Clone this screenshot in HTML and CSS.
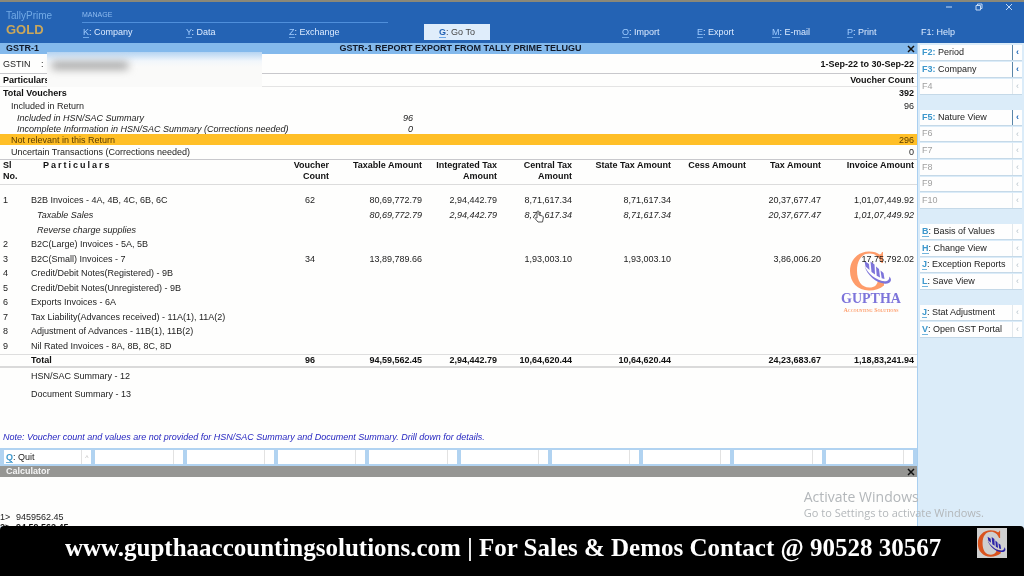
FILE: index.html
```html
<!DOCTYPE html>
<html lang="en">
<head>
<meta charset="utf-8">
<title>TallyPrime - GSTR-1</title>
<link rel="stylesheet" href="styles.css">
</head>
<body>
<svg class="defs" aria-hidden="true">
  <symbol id="mark" viewBox="0 0 44 40">
    <path class="mark-c" d="M34 1 L34 12 L32.500 12 C30.500 6 26 2.600 20.500 2.600 C12.500 2.600 8 9.500 8 19.500 C8 30 12.500 36.500 20.500 36.500 C25.500 36.500 28.500 34 29 29 L35 30.500 L35 34.500 C31 37.800 26 39.500 20 39.500 C8.500 39.500 1 31 1 20 C1 8.500 9.500 0.500 20 0.500 C25 0.500 28 1.700 30.500 3.500 C32 3.500 32.500 2.500 33 1 Z"/>
    <path class="mark-p" d="M15.500 10 L20 13 L20.500 19 L16.500 15.500 Z M21.500 10.500 L25.500 13.500 L26 23.500 L22.500 21 Z M27 15.500 L30 18 L31 26.500 L27.700 24.700 Z M31.500 19.500 L34.500 22 L35.500 28 L32.700 27.300 Z"/>
    <path class="mark-p" d="M15.500 15 C19 22.500 27 29.500 35 30.200 C39 30.500 40.500 28.500 40.300 25.500 C43.800 29 41.500 33 36 32.700 C27 32 18 24 15.500 15 Z"/>
  </symbol>
</svg>

<header class="top">
  <div class="brand">
    <span class="brand-name">TallyPrime</span>
    <strong class="brand-tier">GOLD</strong>
  </div>
  <div class="manage"><span>MANAGE</span></div>
  <div class="window-controls">
    <button aria-label="Minimize"><svg viewBox="0 0 8 8"><path d="M1 4H7"/></svg></button>
    <button aria-label="Restore"><svg viewBox="0 0 8 8"><path d="M1 2.500H5.500V7H1ZM2.500 2.500V1H7V5.500H5.500"/></svg></button>
    <button aria-label="Close window"><svg viewBox="0 0 8 8"><path d="M1 1L7 7M7 1L1 7"/></svg></button>
  </div>
  <nav class="menu">
    <button><b>K</b>: Company</button>
    <button><b>Y</b>: Data</button>
    <button><b>Z</b>: Exchange</button>
    <button class="goto"><b>G</b>: Go To</button>
    <button><b>O</b>: Import</button>
    <button><b>E</b>: Export</button>
    <button><b>M</b>: E-mail</button>
    <button><b>P</b>: Print</button>
    <button>F1: Help</button>
  </nav>
</header>

<div class="work">
  <main class="report">
    <div class="titlebar">
      <span>GSTR-1</span>
      <h1>GSTR-1 REPORT EXPORT FROM TALLY PRIME TELUGU</h1>
      <button class="close" aria-label="Close report"><svg viewBox="0 0 8 8"><path d="M1 1L7 7M7 1L1 7"/></svg></button>
    </div>
    <div class="ident">
      <span class="ident-label">GSTIN</span><span>:</span>
      <strong>1-Sep-22 to 30-Sep-22</strong>
      <div class="redacted"><i></i></div>
    </div>
    <table class="summary">
      <colgroup><col class="s-label"><col class="s-sub"><col></colgroup>
      <thead><tr><th>Particulars</th><th></th><th>Voucher Count</th></tr></thead>
      <tbody>
        <tr class="strong"><td>Total Vouchers</td><td></td><td>392</td></tr>
        <tr><td class="in1">Included in Return</td><td></td><td>96</td></tr>
        <tr class="it"><td class="in2">Included in HSN/SAC Summary</td><td>96</td><td></td></tr>
        <tr class="it short"><td class="in2">Incomplete Information in HSN/SAC Summary (Corrections needed)</td><td>0</td><td></td></tr>
        <tr class="picked"><td class="in1">Not relevant in this Return</td><td></td><td>296</td></tr>
        <tr class="last"><td class="in1">Uncertain Transactions (Corrections needed)</td><td></td><td>0</td></tr>
      </tbody>
    </table>
    <table class="detail">
      <colgroup><col class="c-sl"><col><col class="c-75"><col class="c-93"><col class="c-75"><col class="c-75"><col class="c-99"><col class="c-75"><col class="c-75"><col class="c-95"></colgroup>
      <thead>
        <tr><th>Sl<br>No.</th><th class="spaced">Particulars</th><th>Voucher<br>Count</th><th>Taxable Amount</th><th>Integrated Tax<br>Amount</th><th>Central Tax<br>Amount</th><th>State Tax Amount</th><th>Cess Amount</th><th>Tax Amount</th><th>Invoice Amount</th></tr>
      </thead>
      <tbody>
        <tr><td>1</td><td>B2B Invoices - 4A, 4B, 4C, 6B, 6C</td><td>62</td><td>80,69,772.79</td><td>2,94,442.79</td><td>8,71,617.34</td><td>8,71,617.34</td><td></td><td>20,37,677.47</td><td>1,01,07,449.92</td></tr>
        <tr class="it"><td></td><td>Taxable Sales</td><td></td><td>80,69,772.79</td><td>2,94,442.79</td><td>8,71,617.34</td><td>8,71,617.34</td><td></td><td>20,37,677.47</td><td>1,01,07,449.92</td></tr>
        <tr class="it"><td></td><td>Reverse charge supplies</td><td></td><td></td><td></td><td></td><td></td><td></td><td></td><td></td></tr>
        <tr><td>2</td><td>B2C(Large) Invoices - 5A, 5B</td><td></td><td></td><td></td><td></td><td></td><td></td><td></td><td></td></tr>
        <tr><td>3</td><td>B2C(Small) Invoices - 7</td><td>34</td><td>13,89,789.66</td><td></td><td>1,93,003.10</td><td>1,93,003.10</td><td></td><td>3,86,006.20</td><td>17,75,792.02</td></tr>
        <tr><td>4</td><td>Credit/Debit Notes(Registered) - 9B</td><td></td><td></td><td></td><td></td><td></td><td></td><td></td><td></td></tr>
        <tr><td>5</td><td>Credit/Debit Notes(Unregistered) - 9B</td><td></td><td></td><td></td><td></td><td></td><td></td><td></td><td></td></tr>
        <tr><td>6</td><td>Exports Invoices - 6A</td><td></td><td></td><td></td><td></td><td></td><td></td><td></td><td></td></tr>
        <tr><td>7</td><td>Tax Liability(Advances received) - 11A(1), 11A(2)</td><td></td><td></td><td></td><td></td><td></td><td></td><td></td><td></td></tr>
        <tr><td>8</td><td>Adjustment of Advances - 11B(1), 11B(2)</td><td></td><td></td><td></td><td></td><td></td><td></td><td></td><td></td></tr>
        <tr><td>9</td><td>Nil Rated Invoices - 8A, 8B, 8C, 8D</td><td></td><td></td><td></td><td></td><td></td><td></td><td></td><td></td></tr>
      </tbody>
      <tfoot>
        <tr class="total"><td></td><td>Total</td><td>96</td><td>94,59,562.45</td><td>2,94,442.79</td><td>10,64,620.44</td><td>10,64,620.44</td><td></td><td>24,23,683.67</td><td>1,18,83,241.94</td></tr>
        <tr class="after"><td></td><td>HSN/SAC Summary - 12</td><td colspan="8"></td></tr>
        <tr class="after"><td></td><td>Document Summary - 13</td><td colspan="8"></td></tr>
      </tfoot>
    </table>
    <p class="note">Note: Voucher count and values are not provided for HSN/SAC Summary and Document Summary. Drill down for details.</p>
    <div class="footbar">
      <button><span><b>Q</b>: Quit</span><i>^</i></button>
      <div><span></span><i></i></div><div><span></span><i></i></div><div><span></span><i></i></div>
      <div><span></span><i></i></div><div><span></span><i></i></div><div><span></span><i></i></div>
      <div><span></span><i></i></div><div><span></span><i></i></div><div><span></span><i></i></div>
    </div>
    <section class="calc">
      <h2>Calculator<button class="close" aria-label="Close calculator"><svg viewBox="0 0 8 8"><path d="M1 1L7 7M7 1L1 7"/></svg></button></h2>
      <div class="calc-lines">
        <p><span>1&gt;</span>9459562.45</p>
        <p class="strong"><span>2&gt;</span>94,59,562.45</p>
      </div>
    </section>
    <div class="stamp">
      <svg class="stamp-mark"><use href="#mark"/></svg>
      <strong>GUPTHA</strong>
      <small>Accounting Solutions</small>
    </div>
    <svg class="pointer" viewBox="0 0 10 13"><path d="M3 8V2Q3 1 4 1T5 2V5L8.500 6Q9.500 6.500 9.300 8L8.500 12H4L1 8.500Q1 7 3 8Z"/></svg>
  </main>

  <aside class="side">
    <div class="keys keys-3">
      <button class="on"><span><b>F2:</b> Period</span><i>‹</i></button>
      <button class="on"><span><b>F3:</b> Company</span><i>‹</i></button>
      <button disabled><span>F4</span><i>‹</i></button>
    </div>
    <div class="keys keys-6">
      <button class="on"><span><b>F5:</b> Nature View</span><i>‹</i></button>
      <button disabled><span>F6</span><i>‹</i></button>
      <button disabled><span>F7</span><i>‹</i></button>
      <button disabled><span>F8</span><i>‹</i></button>
      <button disabled><span>F9</span><i>‹</i></button>
      <button disabled><span>F10</span><i>‹</i></button>
    </div>
    <div class="keys keys-4">
      <button><span><b class="u">B</b>: Basis of Values</span><i>‹</i></button>
      <button><span><b class="u">H</b>: Change View</span><i>‹</i></button>
      <button><span><b class="u">J</b>: Exception Reports</span><i>‹</i></button>
      <button><span><b class="u">L</b>: Save View</span><i>‹</i></button>
    </div>
    <div class="keys keys-2">
      <button><span><b class="u">J</b>: Stat Adjustment</span><i>‹</i></button>
      <button><span><b class="u">V</b>: Open GST Portal</span><i>‹</i></button>
    </div>
  </aside>
  <div class="activate">
    <p>Activate Windows</p>
    <small>Go to Settings to activate Windows.</small>
  </div>
</div>

<footer class="banner">
  <p>www.gupthaaccountingsolutions.com | For Sales &amp; Demos Contact @ 90528 30567</p>
  <span class="badge"><svg><use href="#mark"/></svg></span>
</footer>
</body>
</html>
```
FILE: styles.css
```css
* { box-sizing: border-box; }
body {
  margin: 0;
  height: 100vh;
  display: flex;
  flex-direction: column;
  overflow: hidden;
  background: #dbecf9;
  color: #222;
  font: 9px/11px "Liberation Sans", Arial, sans-serif;
}
p, h1, h2 { margin: 0; font-size: inherit; }
i { font-style: normal; }
button { margin: 0; padding: 0; border: 0; background: none; color: inherit; font: inherit; text-align: left; white-space: nowrap; }
.defs { position: absolute; width: 0; height: 0; }
.mark-c { fill: var(--mark-c); }
.mark-p { fill: var(--mark-p); }

/* Top bar */
.top {
  flex: none;
  display: grid;
  grid-template-columns: 82px 1fr 92px;
  grid-template-rows: 21px 20px;
  background: #2463b4;
  border-top: 2px solid #8b8878;
  color: #dcebff;
}
.brand { grid-row: 1 / 3; display: flex; flex-direction: column; padding: 8px 0 0 6px; }
.brand-name { font-size: 10px; line-height: 12px; color: #72aae6; }
.brand-tier { font-size: 13px; line-height: 16px; color: #c9a75c; }
.manage { display: flex; align-items: flex-end; font-size: 7px; color: #8fbcf0; }
.manage span { width: 36%; padding-bottom: 2px; border-bottom: 1px solid #4f8fdb; }
.window-controls { display: flex; justify-content: space-between; padding: 1px 11px 0 13px; }
.window-controls button { height: 8px; line-height: 0; }
.window-controls svg { width: 8px; height: 8px; fill: none; stroke: #c4daf5; }
.menu {
  grid-column: 2 / 4;
  display: grid;
  grid-template-columns: 103fr 103fr 136fr 197fr 75fr 75fr 75fr 74fr 104fr;
  align-items: center;
  padding-bottom: 2px;
}
.menu b { font-weight: 400; color: #9fccff; border-bottom: 1px solid #6fa8e8; }
.menu button { height: 16px; padding-left: 1px; }
.menu .goto { justify-self: start; width: 66px; padding: 0; background: #dfedfb; color: #444; text-align: center; }
.menu .goto b { font-weight: 700; color: #2463b4; }

/* Work area */
.work { position: relative; flex: 1; min-height: 0; display: grid; grid-template-columns: 1fr 107px; grid-template-rows: 100%; }
.report { position: relative; display: flex; flex-direction: column; min-width: 0; background: #fefefd; }
.titlebar {
  display: grid;
  grid-template-columns: 1fr auto 1fr;
  height: 11px;
  padding: 0 2px 0 6px;
  background: #83b9ec;
  color: #101828;
  font-weight: 700;
}
.close { justify-self: end; line-height: 0; }
.close svg { width: 8px; height: 8px; fill: none; stroke: #111; stroke-width: 1.5; }
.ident { position: relative; display: flex; align-items: center; height: 20px; padding: 1px 3px 0 3px; border-bottom: 1px solid #c8c8cc; }
.ident-label { width: 38px; }
.ident strong { margin-left: auto; color: #111; }
.redacted { position: absolute; left: 47px; top: -2px; width: 215px; height: 35px; background: linear-gradient(#b5d4f2, #f1f6fb 9px, #fafaf9 15px); }
.redacted i { display: block; width: 76px; height: 7px; margin: 10px 0 0 5px; background: #999; filter: blur(4px); }

table { width: 100%; border-collapse: collapse; table-layout: fixed; }
td, th { padding: 0; white-space: nowrap; line-height: 10px; text-align: right; vertical-align: middle; }
th, .strong td, .total td { color: #111; font-weight: 700; }
.it { font-style: italic; }

.s-label { width: 300px; }
.s-sub { width: 113px; }
.summary th:first-child, .summary td:first-child { padding-left: 3px; text-align: left; }
.summary th:last-child, .summary td:last-child { padding-right: 3px; }
.summary thead tr { height: 12px; border-bottom: 1px solid #e4e4e4; }
.summary tbody tr { height: 12px; }
.summary tbody .strong { height: 14px; }
.summary tbody .short { height: 10px; }
.summary tbody .picked { height: 11px; background: #ffbf27; color: #5a3c00; }
.summary tbody .last { height: 14px; }
.summary td.in1 { padding-left: 11px; }
.summary td.in2 { padding-left: 17px; }

.c-sl { width: 31px; }
.c-75 { width: 75px; }
.c-93 { width: 93px; }
.c-95 { width: 96px; }
.c-99 { width: 99px; }
.detail thead tr { height: 25px; border-top: 1px solid #c8c8cc; border-bottom: 1px solid #dcdcdc; }
.detail th { vertical-align: top; line-height: 11px; }
.detail th:first-child, .detail td:first-child { padding-left: 3px; text-align: left; }
.detail td:nth-child(2) { text-align: left; }
.detail th:last-child, .detail td:last-child { padding-right: 3px; }
.detail td:nth-child(3) { padding-right: 14px; }
.detail .spaced { padding-left: 12px; text-align: left; letter-spacing: 2px; }
.detail tbody::before { content: ""; display: table-row; height: 8px; }
.detail tbody tr { height: 15px; }
.detail tbody tr:nth-child(n+3):nth-child(odd) { height: 14px; }
.detail .it td:nth-child(2) { padding-left: 6px; }
.detail tbody::after { content: ""; display: table-row; height: 2px; }
.detail .total { height: 12px; border-top: 1px solid #dedede; border-bottom: 2px solid #dadada; }
.detail .after { height: 18px; }

.note { margin-top: auto; padding: 0 3px 5px; color: #2626c0; font-style: italic; }
.footbar { display: grid; grid-template-columns: repeat(10, 1fr); gap: 4px; height: 18px; padding: 2px 4px; background: #b1d3f1; }
.footbar > * { display: flex; align-items: center; height: 14px; background: #fff; }
.footbar span { flex: 1; padding-left: 2px; }
.footbar i { align-self: stretch; width: 10px; border-left: 1px solid #e2e2e2; color: #bbb; font-size: 7px; line-height: 16px; text-align: center; }
.footbar b, .keys .u { color: #3d97cc; border-bottom: 1px solid #72b4dc; }
.calc { flex: none; height: 60px; overflow: hidden; }
.calc h2 { display: flex; justify-content: space-between; height: 11px; padding: 0 2px 0 6px; line-height: 10px; background: #969693; color: #f4f4f4; }
.calc h2 .close { padding-top: 1px; }
.calc-lines { padding-top: 35px; line-height: 10px; }
.calc-lines span { display: inline-block; width: 16px; }
.calc .strong { font-weight: 700; color: #111; }

/* Right-hand key panel */
.side { display: flex; flex-direction: column; gap: 16px; padding: 2px 2px 0; background: #dbecf9; border-left: 1px solid #a9cff0; }
.keys { display: grid; grid-auto-rows: 1fr; gap: 2px; }
.keys-3 { height: 49px; }
.keys-6 { height: 98px; }
.keys-4 { height: 65px; }
.keys-2 { height: 32px; }
.keys button { display: flex; align-items: center; min-height: 0; background: #fefefe; box-shadow: 0 1px 0 #c5d9e8; }
.keys span { flex: 1; padding-left: 2px; }
.keys b { color: #3d97cc; }
.keys i { align-self: stretch; width: 10px; border-left: 1px solid #e2e8ec; color: #b8c4cc; line-height: 14px; text-align: center; }
.keys .on i { border-left-color: #5b86a8; color: #1f68b8; font-weight: 700; }
.keys button:disabled { color: #a0a0a0; }

/* Overlays */
.stamp { --mark-c: #ff9d6b; --mark-p: #7d74dc; position: absolute; left: 841px; top: 208px; display: flex; flex-direction: column; align-items: center; width: 60px; mix-blend-mode: multiply; }
.stamp-mark { width: 44px; height: 40px; }
.stamp strong { color: #7d74dc; font: 700 14px/16px "Liberation Serif", serif; }
.stamp small { color: #ff9d6b; font: 700 6px/6px "Liberation Serif", serif; font-variant: small-caps; white-space: nowrap; }
.pointer { position: absolute; left: 534px; top: 167px; width: 10px; height: 13px; fill: #fff; stroke: #555; }
.activate { position: absolute; right: 40px; bottom: 5px; color: #b3b7ba; font-family: "Open Sans", sans-serif; }
.activate p { font-size: 14px; line-height: 17px; }
.activate small { display: block; font-size: 11px; line-height: 16px; }

/* Contact banner */
.banner { flex: none; display: flex; justify-content: space-between; height: 50px; padding: 2px 17px 0 65px; border-radius: 4px 4px 0 0; background: #000; color: #fff; }
.banner p { font: 700 25px/40px "Liberation Serif", serif; white-space: nowrap; }
.badge { --mark-c: #d9531e; --mark-p: #2a22a8; display: flex; align-items: center; justify-content: center; width: 30px; height: 30px; background: #cfcfcf; }
.badge svg { width: 30px; height: 27px; }
```
